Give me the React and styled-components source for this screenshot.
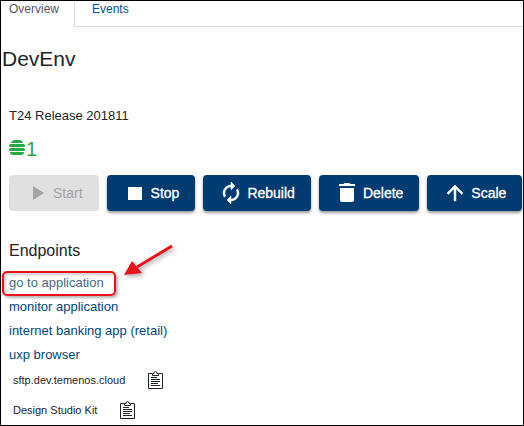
import React from "react";
import styled, { createGlobalStyle, css } from "styled-components";

const GlobalStyle = createGlobalStyle`
  * { box-sizing: border-box; }
  body {
    margin: 0;
    background: #fff;
    color: #212529;
    font-family: "Liberation Sans", Arial, sans-serif;
  }
`;

const Page = styled.main`
  min-height: 100vh;
  border: 1px solid #000;
  overflow: hidden;
`;

const TabBar = styled.nav`
  display: flex;
  height: 26px;
`;

const Tab = styled.a`
  padding: 0 15px 0 8px;
  border-right: 1px solid #dcdcdf;
  font-size: 12px;
  line-height: 16px;
  color: #54585d;
  text-decoration: none;
  ${(p) =>
    !p.$active &&
    css`
      flex: 1;
      padding-left: 17px;
      border-right: 0;
      border-bottom: 1px solid #dcdcdf;
      color: #00508f;
    `}
`;

const Title = styled.h1`
  margin: 20px 0 0 1px;
  font-size: 21px;
  line-height: 24px;
  font-weight: 400;
`;

const Content = styled.section`
  padding: 0 0 0 8px;
`;

const Release = styled.p`
  margin: 37px 0 0;
  font-size: 13px;
  line-height: 16px;
`;

const Instances = styled.div`
  display: flex;
  align-items: center;
  gap: 1px;
  height: 24px;
  margin-top: 13px;
  color: #28a745;
  font-size: 20px;
  line-height: 24px;

  svg { margin-bottom: 4px; }
`;

const Actions = styled.div`
  display: flex;
  gap: 8px;
  margin-top: 14px;
`;

const ActionButton = styled.button`
  display: flex;
  flex: none;
  align-items: center;
  gap: 4px;
  height: 36px;
  padding: 0 16px;
  border: 0;
  border-radius: 4px;
  background: #003c71;
  box-shadow: 0 2px 3px rgba(0, 0, 0, 0.4);
  color: #fff;
  font-family: inherit;
  font-size: 14px;
  -webkit-text-stroke: 0.3px currentColor;

  &:disabled {
    background: #e0e0e0;
    box-shadow: none;
    color: #a3a3a3;
    -webkit-text-stroke: 0;
  }
`;

const Heading = styled.h2`
  margin: 30px 0 0;
  font-size: 16px;
  line-height: 20px;
  font-weight: 400;
`;

const Links = styled.ul`
  margin: 10px 0 0;
  padding: 0;
  list-style: none;
`;

const LinkRow = styled.li`
  position: relative;
  width: fit-content;
  height: 24px;
`;

const EndpointLink = styled.a`
  display: block;
  font-size: 13px;
  line-height: 24px;
  color: ${(p) => (p.$muted ? "#47688c" : "#00467f")};
  text-decoration: none;
`;

const Highlight = styled.span`
  position: absolute;
  inset: 0 -12px -1px -7px;
  border: 2px solid #ee1018;
  border-radius: 5px;
  box-shadow: 2px 2px 3px rgba(0, 0, 0, 0.3), inset 2px 2px 3px rgba(0, 0, 0, 0.2);
  pointer-events: none;
`;

const Arrow = styled.svg`
  position: absolute;
  left: 112px;
  top: -32px;
  filter: drop-shadow(2px 2px 2px rgba(0, 0, 0, 0.35));
  pointer-events: none;
`;

const CopyList = styled.div`
  display: flex;
  flex-direction: column;
  gap: 4px;
`;

const CopyRow = styled.div`
  display: flex;
  align-items: center;
  gap: 23px;
  height: 26px;
  padding-left: 4px;
  font-size: 11px;
`;

const CopyButton = styled.button`
  display: flex;
  padding: 0;
  border: 0;
  background: none;
  color: #20262c;
`;

const Glyph = ({ children }) => (
  <svg width="24" height="24" viewBox="0 0 24 24" fill="currentColor" aria-hidden="true">
    {children}
  </svg>
);

const actions = [
  { label: "Start", path: "M8 5v14l11-7z", disabled: true },
  { label: "Stop", path: "M5 6h14v13H5z" },
  {
    label: "Rebuild",
    path: "M12 6v3l4-4-4-4v3c-4.42 0-8 3.58-8 8 0 1.57.46 3.03 1.24 4.26L6.7 14.8A5.87 5.87 0 0 1 6 12c0-3.31 2.69-6 6-6zm6.76 1.74L17.3 9.2c.44.84.7 1.79.7 2.8 0 3.31-2.69 6-6 6v-3l-4 4 4 4v-3c4.42 0 8-3.58 8-8 0-1.57-.46-3.03-1.24-4.26z",
    bold: true,
  },
  { label: "Delete", path: "M5 7h14v12a2 2 0 0 1-2 2H7a2 2 0 0 1-2-2zM4 3h4.500l1-1h5l1 1H20v2H4z" },
  { label: "Scale", path: "M4 12l1.410 1.410L11 7.830V20h2V7.830l5.580 5.590L20 12l-8-8z", bold: true },
];

const endpoints = ["go to application", "monitor application", "internet banking app (retail)", "uxp browser"];
const copyItems = ["sftp.dev.temenos.cloud", "Design Studio Kit"];

export default function App() {
  return (
    <>
      <GlobalStyle />
      <Page>
        <TabBar>
          <Tab href="#overview" $active>Overview</Tab>
          <Tab href="#events">Events</Tab>
        </TabBar>
        <Title>DevEnv</Title>
        <Content>
          <Release>T24 Release 201811</Release>
          <Instances>
            <svg width="16" height="15" viewBox="0 0 16 15" fill="currentColor" aria-hidden="true">
              <path d="M2 3Q3 0 6 0h4q3 0 4 3z" />
              <rect y="4" width="16" height="3" rx="1.500" />
              <rect y="8" width="16" height="3" rx="1.500" />
              <path d="M1 12h14q0 3-3 3H4q-3 0-3-3z" />
            </svg>
            <span>1</span>
          </Instances>
          <Actions>
            {actions.map(({ label, path, disabled, bold }) => (
              <ActionButton key={label} type="button" disabled={disabled}>
                <Glyph>
                  <path d={path} stroke={bold ? "currentColor" : "none"} strokeWidth="0.500" />
                </Glyph>
                {label}
              </ActionButton>
            ))}
          </Actions>
          <Heading>Endpoints</Heading>
          <Links>
            {endpoints.map((name, i) => (
              <LinkRow key={name}>
                <EndpointLink href="#endpoint" $muted={i === 0}>{name}</EndpointLink>
                {i === 0 && (
                  <>
                    <Highlight />
                    <Arrow width="56" height="40" viewBox="0 0 56 40" aria-hidden="true">
                      <path d="M51 7L16 28" stroke="#ee1018" strokeWidth="3" />
                      <path d="M3 36L11 22L21 34z" fill="#ee1018" />
                    </Arrow>
                  </>
                )}
              </LinkRow>
            ))}
          </Links>
          <CopyList>
            {copyItems.map((name) => (
              <CopyRow key={name}>
                <span>{name}</span>
                <CopyButton type="button" aria-label={`Copy ${name}`}>
                  <svg width="15" height="18" viewBox="0 0 15 18" fill="none" stroke="currentColor" aria-hidden="true">
                    <path d="M4 2.500H.5v15h14v-15H11M4.500 4.500v-2H6q0-2 1.500-2T9 2.500h1.500v2z" />
                    <path d="M3 6.500h6M3 8.500h9M3 10.500h9M3 12.500h7M3 14.500h9" />
                  </svg>
                </CopyButton>
              </CopyRow>
            ))}
          </CopyList>
        </Content>
      </Page>
    </>
  );
}
